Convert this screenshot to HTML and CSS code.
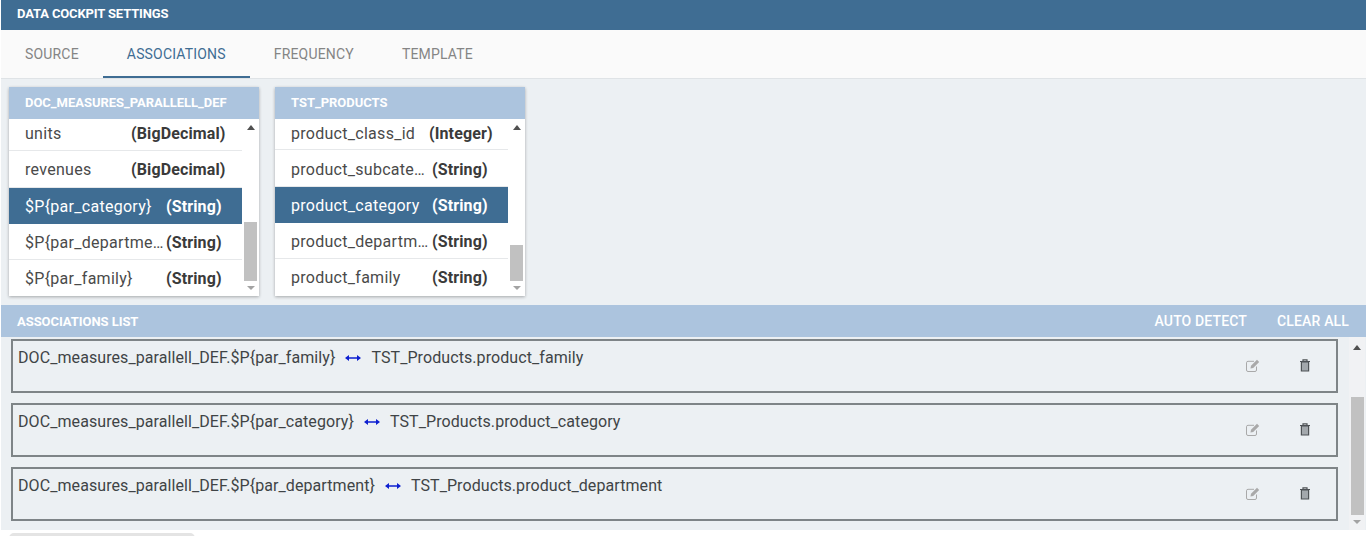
FILE: index.html
```html
<!DOCTYPE html>
<html lang="en">
<head>
<meta charset="utf-8">
<title>Data Cockpit Settings</title>
<link rel="stylesheet" href="styles.css">
</head>
<body>
<div class="page">
  <header class="title-bar">DATA COCKPIT SETTINGS</header>
  <nav class="tabs">
    <a class="tab">SOURCE</a>
    <a class="tab active">ASSOCIATIONS</a>
    <a class="tab">FREQUENCY</a>
    <a class="tab">TEMPLATE</a>
  </nav>
  <section class="cards">
    <div class="card">
      <div class="card-head">DOC_MEASURES_PARALLELL_DEF</div>
      <div class="card-body">
        <ul class="rows">
          <li class="row first-a"><span class="name narrow">units</span><b class="type">(BigDecimal)</b></li>
          <li class="row tall"><span class="name narrow">revenues</span><b class="type">(BigDecimal)</b></li>
          <li class="row selected"><span class="name">$P{par_category}</span><b class="type">(String)</b></li>
          <li class="row nudge"><span class="name">$P{par_department}</span><b class="type">(String)</b></li>
          <li class="row last"><span class="name">$P{par_family}</span><b class="type">(String)</b></li>
        </ul>
        <div class="scrollbar">
          <span class="arrow up"></span>
          <span class="track"><span class="thumb thumb-a"></span></span>
          <span class="arrow down"></span>
        </div>
      </div>
    </div>
    <div class="card">
      <div class="card-head">TST_PRODUCTS</div>
      <div class="card-body">
        <ul class="rows">
          <li class="row first-b"><span class="name mid">product_class_id</span><b class="type">(Integer)</b></li>
          <li class="row tall nudge"><span class="name">product_subcategory</span><b class="type">(String)</b></li>
          <li class="row selected"><span class="name">product_category</span><b class="type">(String)</b></li>
          <li class="row nudge"><span class="name">product_department</span><b class="type">(String)</b></li>
          <li class="row last"><span class="name">product_family</span><b class="type">(String)</b></li>
        </ul>
        <div class="scrollbar">
          <span class="arrow up"></span>
          <span class="track"><span class="thumb thumb-b"></span></span>
          <span class="arrow down"></span>
        </div>
      </div>
    </div>
  </section>
  <div class="list-bar">
    <span class="list-title">ASSOCIATIONS LIST</span>
    <span class="list-actions"><a>AUTO DETECT</a><a>CLEAR ALL</a></span>
  </div>
  <section class="list-wrap">
    <div class="items">
      <div class="item">
        <p class="assoc">DOC_measures_parallell_DEF.$P{par_family}<svg class="link" viewBox="0 0 16 8"><path d="M2 4h12"/><path class="head" d="M0 4l4-3v6zM16 4l-4-3v6z"/></svg>TST_Products.product_family</p>
        <div class="item-icons">
          <svg class="edit" viewBox="0 0 14 13"><path class="edit-box" d="M10.500 7.500v3.500a1.500 1.500 0 0 1-1.500 1.500H2A1.500 1.500 0 0 1 .5 11V3.800A1.500 1.500 0 0 1 2 2.300h6"/><path class="edit-pen" d="M4.500 9.500 5 6.800 11 .8l2.200 2.200-6 6z"/></svg>
          <svg class="trash" viewBox="0 0 12 13"><path class="trash-lid" d="M1 2.500h10M4 2.500V.8h4v1.700"/><path class="trash-can" d="M2.400 3h7.200v9H2.400z"/></svg>
        </div>
      </div>
      <div class="item">
        <p class="assoc">DOC_measures_parallell_DEF.$P{par_category}<svg class="link" viewBox="0 0 16 8"><path d="M2 4h12"/><path class="head" d="M0 4l4-3v6zM16 4l-4-3v6z"/></svg>TST_Products.product_category</p>
        <div class="item-icons">
          <svg class="edit" viewBox="0 0 14 13"><path class="edit-box" d="M10.500 7.500v3.500a1.500 1.500 0 0 1-1.500 1.500H2A1.500 1.500 0 0 1 .5 11V3.800A1.500 1.500 0 0 1 2 2.300h6"/><path class="edit-pen" d="M4.500 9.500 5 6.800 11 .8l2.200 2.200-6 6z"/></svg>
          <svg class="trash" viewBox="0 0 12 13"><path class="trash-lid" d="M1 2.500h10M4 2.500V.8h4v1.700"/><path class="trash-can" d="M2.400 3h7.200v9H2.400z"/></svg>
        </div>
      </div>
      <div class="item">
        <p class="assoc">DOC_measures_parallell_DEF.$P{par_department}<svg class="link" viewBox="0 0 16 8"><path d="M2 4h12"/><path class="head" d="M0 4l4-3v6zM16 4l-4-3v6z"/></svg>TST_Products.product_department</p>
        <div class="item-icons">
          <svg class="edit" viewBox="0 0 14 13"><path class="edit-box" d="M10.500 7.500v3.500a1.500 1.500 0 0 1-1.500 1.500H2A1.500 1.500 0 0 1 .5 11V3.800A1.500 1.500 0 0 1 2 2.300h6"/><path class="edit-pen" d="M4.500 9.500 5 6.800 11 .8l2.200 2.200-6 6z"/></svg>
          <svg class="trash" viewBox="0 0 12 13"><path class="trash-lid" d="M1 2.500h10M4 2.500V.8h4v1.700"/><path class="trash-can" d="M2.400 3h7.200v9H2.400z"/></svg>
        </div>
      </div>
    </div>
    <div class="scrollbar list-scroll">
      <span class="arrow up"></span>
      <span class="track"><span class="thumb thumb-list"></span></span>
      <span class="arrow down"></span>
    </div>
  </section>
  <div class="footer"><span class="footer-chip"></span></div>
</div>
</body>
</html>
```
FILE: styles.css
```css
* { box-sizing: border-box; }
html, body { margin: 0; height: 536px; overflow: hidden; background: #fff; }
body { font-family: Roboto, "Liberation Sans", sans-serif; color: #3c3c3c; }
.page { display: flex; flex-direction: column; height: 536px; padding-left: 1px; }

.title-bar {
  height: 30px; padding: 0 0 0 16px;
  background: #3f6d93; color: #fff;
  font-size: 13px; font-weight: 700; line-height: 28px; letter-spacing: -.14px;
}
.tabs {
  height: 49px; display: flex; background: #fafafa;
  border-bottom: 1px solid #dfe3e6;
}
.tab {
  height: 48px; padding: 0 24px; font-size: 14px; line-height: 48px; color: #858585; letter-spacing: .18px;
}
.tab.active { color: #3f6d93; border-bottom: 2px solid #3f6d93; }

.cards {
  height: 226px; display: flex; gap: 16px; padding: 8px 0 0 8px;
  background: #ecf0f3;
}
.card {
  width: 250px; height: 209px; display: flex; flex-direction: column;
  background: #fff; box-shadow: 0 1px 3px rgba(0,0,0,.3);
}
.card-head {
  height: 32px; padding-left: 16px; background: #acc4de; color: #fff;
  font-size: 13px; font-weight: 700; line-height: 31px; letter-spacing: -.03px;
}
.card-body { flex: 1; display: flex; min-height: 0; }
.rows { flex: 1; min-width: 0; margin: 0; padding: 0; list-style: none; }
.row {
  height: 36px; display: flex; align-items: center; padding: 0 0 0 16px;
  border-bottom: 1px solid #e6e8ea; font-size: 16px;
}
.first-a { height: 32px; padding-bottom: 3px; }
.first-b { height: 31px; padding-bottom: 2px; }
.tall { height: 37px; }
.nudge { padding-top: 2px; }
.row.last { border-bottom: 0; }
.name {
  width: 141px; flex: none; overflow: hidden; white-space: nowrap; text-overflow: ellipsis;
  color: #4a4a4a; padding-right: 2px; letter-spacing: .28px;
}
.name.narrow { width: 106px; }
.name.mid { width: 138px; }
.type { color: #3a3a3a; font-weight: 700; white-space: nowrap; letter-spacing: .12px; }
.row.selected { background: #3f6d93; border-bottom: 0; }
.row.selected .name, .row.selected .type { color: #fff; }

.scrollbar {
  width: 17px; flex: none; display: flex; flex-direction: column; align-items: center;
  padding-top: 6px; background: #fff;
}
.arrow { flex: none; width: 0; height: 0; border-left: 4px solid transparent; border-right: 4px solid transparent; }
.arrow.up { border-bottom: 5px solid #505050; }
.arrow.down { border-top: 4px solid #a3a3a3; margin: 5px 0 6px; }
.track { flex: 1; width: 13px; display: flex; flex-direction: column; justify-content: flex-end; }
.thumb { display: block; width: 13px; background: #c1c1c1; }
.thumb-a { height: 59px; }
.thumb-b { height: 36px; }

.list-bar {
  height: 32px; display: flex; justify-content: space-between; align-items: center;
  padding: 0 17px 0 16px; background: #acc4de; color: #fff;
}
.list-title { font-size: 13px; font-weight: 700; letter-spacing: -.05px; }
.list-actions { display: flex; gap: 30px; font-size: 14px; font-weight: 500; letter-spacing: .15px; }

.list-wrap { height: 193px; display: flex; background: #ecf0f3; }
.items { flex: 1; min-width: 0; display: flex; flex-direction: column; gap: 10px; padding: 2px 11px 0 10px; }
.item {
  height: 54px; display: flex; justify-content: space-between;
  border: 2px solid #7e8487; padding: 7px 25px 0 5px;
}
.assoc { margin: 0; display: flex; align-items: flex-start; font-size: 16px; line-height: 20px; color: #3f4446; white-space: nowrap; letter-spacing: .08px; }
.link { width: 16px; height: 8px; margin: 6px 10px 0 10px; flex: none; }
.link path { fill: none; stroke: #0d1fd0; stroke-width: 1.500; }
.link .head { fill: #0d1fd0; stroke: none; }
.item-icons { display: flex; gap: 39px; padding-top: 11px; }
.edit { width: 14px; height: 13px; }
.edit-box { fill: none; stroke: #a9a9a9; stroke-width: 1; }
.edit-pen { fill: #a9a9a9; }
.trash { width: 12px; height: 13px; }
.trash-lid { fill: none; stroke: #4f5356; stroke-width: 1.200; }
.trash-can { fill: #a3a8ac; stroke: #4f5356; stroke-width: 1.200; }

.list-scroll { width: 16px; margin-right: 1px; padding-top: 8px; background: #f1f2f4; }
.thumb-list { height: 118px; }

.footer { flex: 1; padding: 3px 0 0 8px; background: #fff; overflow: hidden; }
.footer-chip { display: block; width: 186px; height: 12px; border-radius: 5px; background: #e4e4e4; }
```
